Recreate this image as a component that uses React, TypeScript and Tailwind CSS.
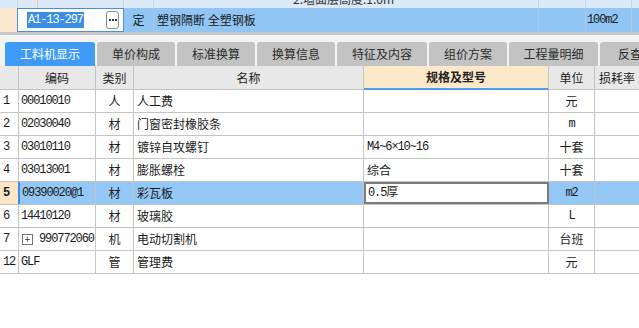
import React from "react";

type Row = {
  no: string;
  code: string;
  kind: string;
  name: string;
  spec: string;
  unit: string;
  expand?: boolean;
  selected?: boolean;
};

const rows: Row[] = [
  { no: "1", code: "00010010", kind: "人", name: "人工费", spec: "", unit: "元" },
  { no: "2", code: "02030040", kind: "材", name: "门窗密封橡胶条", spec: "", unit: "m" },
  { no: "3", code: "03010110", kind: "材", name: "镀锌自攻螺钉", spec: "M4~6×10~16", unit: "十套" },
  { no: "4", code: "03013001", kind: "材", name: "膨胀螺栓", spec: "综合", unit: "十套" },
  { no: "5", code: "09390020@1", kind: "材", name: "彩瓦板", spec: "0.5厚", unit: "m2", selected: true },
  { no: "6", code: "14410120", kind: "材", name: "玻璃胶", spec: "", unit: "L" },
  { no: "7", code: "990772060", kind: "机", name: "电动切割机", spec: "", unit: "台班", expand: true },
  { no: "12", code: "GLF", kind: "管", name: "管理费", spec: "", unit: "元" },
];

const tabs = [
  { label: "工料机显示", w: "w-[90px]", active: true },
  { label: "单价构成", w: "w-[78px]" },
  { label: "标准换算", w: "w-[78px]" },
  { label: "换算信息", w: "w-[78px]" },
  { label: "特征及内容", w: "w-[90px]" },
  { label: "组价方案", w: "w-[78px]" },
  { label: "工程量明细", w: "w-[89px]" },
  { label: "反查", w: "w-[60px]" },
];

const mono = "font-['Liberation_Mono','Noto_Sans_CJK_SC',monospace] text-[12px] tracking-[-1.1px]";

function isLatin(s: string) {
  return /^[\x00-\x7f]+$/.test(s);
}

export default function App() {
  return (
    <div className="w-[639px] h-[328px] overflow-hidden bg-white font-['Noto_Sans_CJK_SC',sans-serif] text-[12px] leading-none text-[#1a1a1a]">
      {/* row above, mostly scrolled out */}
      <div className="flex h-[8px] bg-[#dce9f8] overflow-hidden">
        <div className="w-[18px] border-r border-[#c9d6e4]" />
        <div className="w-[20px] border-r border-[#f0c8a0]" />
        <div className="w-[86px] border-r border-[#c9d6e4]" />
        <div className="w-[30px] border-r border-[#c9d6e4]" />
        <div className="w-[385px] border-r border-[#c9d6e4] pl-[139px]">
          <div className="-mt-[8px] leading-[14px] text-[#333] whitespace-nowrap">2.墙面层高度:1.0m</div>
        </div>
        <div className="w-[47px] border-r border-[#c9d6e4]" />
        <div className="w-[46px] border-r border-[#c9d6e4]" />
        <div className="flex-1" />
      </div>

      {/* selected quota row */}
      <div className="flex h-[24px] bg-[#91c6f4]">
        <div className="w-[17px] bg-[#fde9cf]" />
        <div className="w-[107px] bg-white border border-[#4a90e2] flex items-center pl-[9px] pr-[4px]">
          <span className={`${mono} bg-[#3b8ee8] text-white px-[1px] py-[2px]`}>A1-13-297</span>
          <span className="ml-auto w-[13px] h-[18px] rounded-[3px] border border-[#8a8a8a] bg-white flex items-center justify-center gap-[1px]">
            <span className="w-[2px] h-[2px] bg-[#333]" />
            <span className="w-[2px] h-[2px] bg-[#333]" />
            <span className="w-[2px] h-[2px] bg-[#333]" />
          </span>
        </div>
        <div className="w-[30px] border-r border-[#a9c9e6] flex items-center justify-center">定</div>
        <div className="w-[385px] border-r border-[#a9c9e6] flex items-center pl-[3px]">塑钢隔断 全塑钢板</div>
        <div className="w-[47px] border-r border-[#a9c9e6]" />
        <div className="w-[46px] border-r border-[#a9c9e6] flex items-center pl-[1px]">
          <span className={mono}>100m2</span>
        </div>
        <div className="flex-1" />
      </div>

      <div className="h-[3px] bg-[#c9c9c9]" />

      {/* tabs */}
      <div className="bg-[#f3f3f3] pt-[7px] pl-[5px] flex gap-[2px] h-[31px] overflow-hidden">
        {tabs.map((t) => (
          <div
            key={t.label}
            className={`${t.w} shrink-0 h-[24px] rounded-t-[3px] flex items-center justify-center text-[12px] ${
              t.active ? "bg-[#3f9bf7] text-white" : "bg-[#c3c3c3] text-[#2a2a2a]"
            }`}
          >
            {t.label}
          </div>
        ))}
      </div>

      {/* header */}
      <div className="flex h-[24px] bg-[#e8e8e8] text-[#222]">
        <div className="w-[19px] border-r border-b border-[#c2c2c2]" />
        <div className="w-[77px] border-r border-b border-[#c2c2c2] flex items-center justify-center">编码</div>
        <div className="w-[38px] border-r border-b border-[#c2c2c2] flex items-center justify-center">类别</div>
        <div className="w-[230px] border-r border-b border-[#c2c2c2] flex items-center justify-center">名称</div>
        <div className="w-[185px] border-r border-r-[#c2c2c2] border-b-2 border-b-[#4a9cf5] bg-[#fde8c9] flex items-center justify-center font-bold">
          规格及型号
        </div>
        <div className="w-[46px] border-r border-b border-[#c2c2c2] flex items-center justify-center">单位</div>
        <div className="flex-1 border-b border-[#c2c2c2] flex items-center pl-[4px] whitespace-nowrap">损耗率</div>
      </div>

      {/* body */}
      {rows.map((r) => (
        <div key={r.no} className={`flex h-[23px] border-b border-[#c4c4c4] ${r.selected ? "bg-[#93c7f5]" : "bg-white"}`}>
          <div
            className={`w-[19px] border-r border-[#c4c4c4] flex items-center pl-[3px] ${mono} ${
              r.selected ? "bg-[#fde6c8] font-bold" : ""
            }`}
          >
            {r.no}
          </div>
          <div
            className={`w-[77px] border-r border-[#c4c4c4] flex items-center pl-[2px] ${
              r.selected ? "border-l-2 border-l-[#3a8ee6] -ml-[1px] w-[78px] pl-[1px]" : ""
            }`}
          >
            {r.expand && (
              <span className="w-[11px] h-[11px] mr-[6px] ml-[1px] border border-[#777] bg-white flex items-center justify-center text-[10px] text-[#333]">
                +
              </span>
            )}
            <span className={mono}>{r.code}</span>
          </div>
          <div className="w-[38px] border-r border-[#c4c4c4] flex items-center justify-center">{r.kind}</div>
          <div className="w-[230px] border-r border-[#c4c4c4] flex items-center pl-[3px]">{r.name}</div>
          <div
            className={`w-[185px] flex items-center ${
              r.selected ? "bg-white border-2 border-[#7b7b7b] pl-[2px]" : "border-r border-[#c4c4c4] pl-[3px]"
            }`}
          >
            <span className={isLatin(r.spec) || r.spec.startsWith("0") || r.spec.startsWith("M") ? mono : ""}>{r.spec}</span>
          </div>
          <div className="w-[46px] border-r border-[#c4c4c4] flex items-center justify-center">
            <span className={isLatin(r.unit) ? mono : ""}>{r.unit}</span>
          </div>
          <div className="flex-1" />
        </div>
      ))}
    </div>
  );
}
